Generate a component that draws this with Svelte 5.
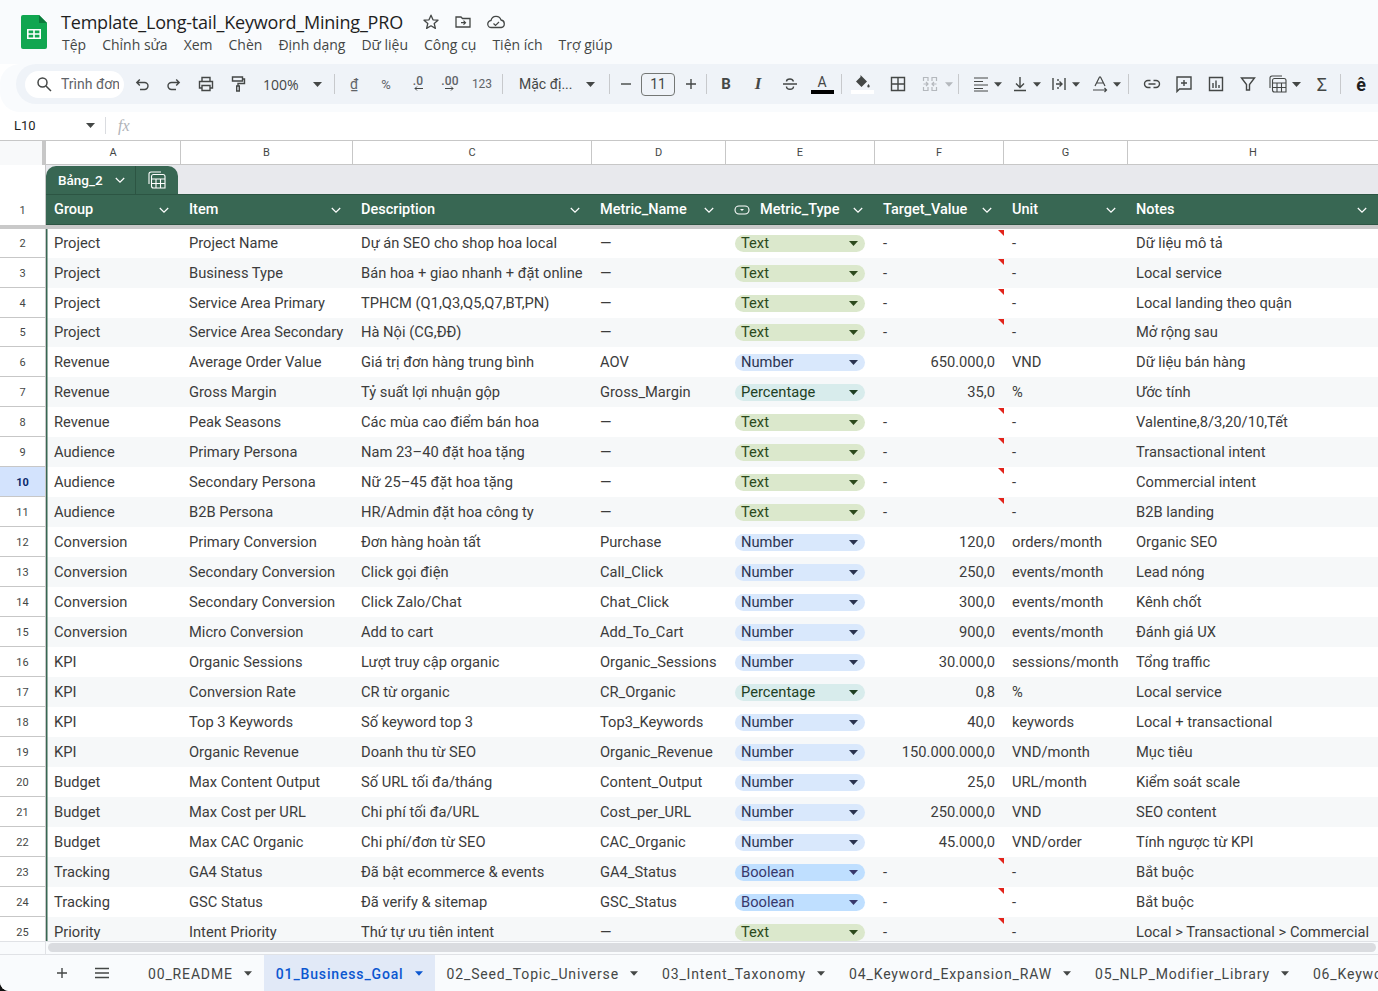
<script>
  const rows = [
    [2, 'Project', 'Project Name', 'Dự án SEO cho shop hoa local', '—', 'Text', '-', '-', 'Dữ liệu mô tả'],
    [3, 'Project', 'Business Type', 'Bán hoa + giao nhanh + đặt online', '—', 'Text', '-', '-', 'Local service'],
    [4, 'Project', 'Service Area Primary', 'TPHCM (Q1,Q3,Q5,Q7,BT,PN)', '—', 'Text', '-', '-', 'Local landing theo quận'],
    [5, 'Project', 'Service Area Secondary', 'Hà Nội (CG,ĐĐ)', '—', 'Text', '-', '-', 'Mở rộng sau'],
    [6, 'Revenue', 'Average Order Value', 'Giá trị đơn hàng trung bình', 'AOV', 'Number', '650.000,0', 'VND', 'Dữ liệu bán hàng'],
    [7, 'Revenue', 'Gross Margin', 'Tỷ suất lợi nhuận gộp', 'Gross_Margin', 'Percentage', '35,0', '%', 'Ước tính'],
    [8, 'Revenue', 'Peak Seasons', 'Các mùa cao điểm bán hoa', '—', 'Text', '-', '-', 'Valentine,8/3,20/10,Tết'],
    [9, 'Audience', 'Primary Persona', 'Nam 23–40 đặt hoa tặng', '—', 'Text', '-', '-', 'Transactional intent'],
    [10, 'Audience', 'Secondary Persona', 'Nữ 25–45 đặt hoa tặng', '—', 'Text', '-', '-', 'Commercial intent'],
    [11, 'Audience', 'B2B Persona', 'HR/Admin đặt hoa công ty', '—', 'Text', '-', '-', 'B2B landing'],
    [12, 'Conversion', 'Primary Conversion', 'Đơn hàng hoàn tất', 'Purchase', 'Number', '120,0', 'orders/month', 'Organic SEO'],
    [13, 'Conversion', 'Secondary Conversion', 'Click gọi điện', 'Call_Click', 'Number', '250,0', 'events/month', 'Lead nóng'],
    [14, 'Conversion', 'Secondary Conversion', 'Click Zalo/Chat', 'Chat_Click', 'Number', '300,0', 'events/month', 'Kênh chốt'],
    [15, 'Conversion', 'Micro Conversion', 'Add to cart', 'Add_To_Cart', 'Number', '900,0', 'events/month', 'Đánh giá UX'],
    [16, 'KPI', 'Organic Sessions', 'Lượt truy cập organic', 'Organic_Sessions', 'Number', '30.000,0', 'sessions/month', 'Tổng traffic'],
    [17, 'KPI', 'Conversion Rate', 'CR từ organic', 'CR_Organic', 'Percentage', '0,8', '%', 'Local service'],
    [18, 'KPI', 'Top 3 Keywords', 'Số keyword top 3', 'Top3_Keywords', 'Number', '40,0', 'keywords', 'Local + transactional'],
    [19, 'KPI', 'Organic Revenue', 'Doanh thu từ SEO', 'Organic_Revenue', 'Number', '150.000.000,0', 'VND/month', 'Mục tiêu'],
    [20, 'Budget', 'Max Content Output', 'Số URL tối đa/tháng', 'Content_Output', 'Number', '25,0', 'URL/month', 'Kiểm soát scale'],
    [21, 'Budget', 'Max Cost per URL', 'Chi phí tối đa/URL', 'Cost_per_URL', 'Number', '250.000,0', 'VND', 'SEO content'],
    [22, 'Budget', 'Max CAC Organic', 'Chi phí/đơn từ SEO', 'CAC_Organic', 'Number', '45.000,0', 'VND/order', 'Tính ngược từ KPI'],
    [23, 'Tracking', 'GA4 Status', 'Đã bật ecommerce & events', 'GA4_Status', 'Boolean', '-', '-', 'Bắt buộc'],
    [24, 'Tracking', 'GSC Status', 'Đã verify & sitemap', 'GSC_Status', 'Boolean', '-', '-', 'Bắt buộc'],
    [25, 'Priority', 'Intent Priority', 'Thứ tự ưu tiên intent', '—', 'Text', '-', '-', 'Local > Transactional > Commercial']
  ];
  const letters = ['A', 'B', 'C', 'D', 'E', 'F', 'G', 'H'];
  const headers = ['Group', 'Item', 'Description', 'Metric_Name', 'Metric_Type', 'Target_Value', 'Unit', 'Notes'];
  const menu = ['Tệp', 'Chỉnh sửa', 'Xem', 'Chèn', 'Định dạng', 'Dữ liệu', 'Công cụ', 'Tiện ích', 'Trợ giúp'];
  const tabs = ['00_README', '01_Business_Goal', '02_Seed_Topic_Universe', '03_Intent_Taxonomy', '04_Keyword_Expansion_RAW', '05_NLP_Modifier_Library', '06_Keyword'];
</script>

{#snippet caret()}
  <svg class="caret" width="9" height="5" viewBox="0 0 9 5"><path d="M0 0h9L4.5 5z" fill="currentColor" /></svg>
{/snippet}

{#snippet chev()}
  <svg class="chev" width="12" height="12" viewBox="0 0 12 12"><path d="M1.8 4 6 8.2 10.2 4" fill="none" stroke="#fff" stroke-width="1.2" /></svg>
{/snippet}

<div class="page">
  <header class="top">
    <svg class="logo" width="26" height="34" viewBox="0 0 26 34">
      <path d="M2 0h16l8 8v24a2 2 0 0 1-2 2H2a2 2 0 0 1-2-2V2a2 2 0 0 1 2-2z" fill="#11a650" />
      <path d="M18 0l8 8h-8z" fill="#0b7a3b" />
      <path d="M6 14h14v10H6z M7.6 15.6v2.6h4.6v-2.6z M13.8 15.6v2.6h4.6v-2.6z M7.6 19.8v2.6h4.6v-2.6z M13.8 19.8v2.6h4.6v-2.6z" fill="#fff" fill-rule="evenodd" />
    </svg>
    <div class="titles">
      <div class="title-line">
        <span class="title">Template_Long-tail_Keyword_Mining_PRO</span>
        <svg class="ti" width="18" height="18" viewBox="0 0 18 18"><path d="m9 2.2 2 4.6 5 .4-3.8 3.3 1.2 4.9L9 12.8l-4.400 2.600 1.200-4.900L2 7.200l5-.4z" fill="none" stroke="#444746" stroke-width="1.300" stroke-linejoin="round" /></svg>
        <svg class="ti" width="18" height="18" viewBox="0 0 18 18"><path d="M2 4h5l1.500 1.500H16V14H2z" fill="none" stroke="#444746" stroke-width="1.300" /><path d="M7 9.700h4M9.500 7.700l2 2-2 2" fill="none" stroke="#444746" stroke-width="1.200" /></svg>
        <svg class="ti" width="20" height="18" viewBox="0 0 20 18"><path d="M5.500 14.500a3.500 3.500 0 0 1-.5-7A5.200 5.200 0 0 1 15 7a3.800 3.800 0 0 1 .2 7.500z" fill="none" stroke="#444746" stroke-width="1.300" /><path d="m7.500 10.500 2 2 3.500-3.500" fill="none" stroke="#444746" stroke-width="1.200" /></svg>
      </div>
      <nav class="menu">
        {#each menu as item}<span>{item}</span>{/each}
      </nav>
    </div>
  </header>

  <div class="toolbar">
    <div class="search">
      <svg width="16" height="16" viewBox="0 0 16 16"><circle cx="6.500" cy="6.500" r="4.500" fill="none" stroke="#444746" stroke-width="1.500" /><path d="m10 10 5 5" stroke="#444746" stroke-width="1.500" /></svg>
      <span>Trình đơn</span>
    </div>
    <span class="btn"><svg width="18" height="18" viewBox="0 0 18 18"><path d="M4 7.500h7.500a3.500 3.500 0 0 1 0 7H7M6.800 4.500 3.800 7.500l3 3" class="st" /></svg></span>
    <span class="btn"><svg width="18" height="18" viewBox="0 0 18 18"><path d="M14 7.500H6.500a3.500 3.500 0 0 0 0 7H11M11.200 4.500l3 3-3 3" class="st" /></svg></span>
    <span class="btn"><svg width="18" height="18" viewBox="0 0 18 18"><path d="M5 6V2.500h8V6M5 13H2.500V6.500h13V13H13M5 10.500h8v5H5z" class="st" /></svg></span>
    <span class="btn"><svg width="18" height="18" viewBox="0 0 18 18"><path d="M3.500 2h10v4h-10zM13.500 4h2v4.500H9V11M7.700 11h2.600v5H7.700z" class="st" /></svg></span>
    <span class="zoom">100%</span>
    <span class="cbtn z">{@render caret()}</span>
    <i class="sep zs"></i>
    <span class="btn txt dong">₫</span>
    <span class="btn txt">%</span>
    <span class="btn dec"><b>.0</b><svg width="10" height="5" viewBox="0 0 10 5"><path d="M10 2.500H2M4 .5l-2 2 2 2" fill="none" stroke="#444746" stroke-width="1" /></svg></span>
    <span class="btn dec"><b>.00</b><svg width="10" height="5" viewBox="0 0 10 5"><path d="M0 2.500h8M6 .5l2 2-2 2" fill="none" stroke="#444746" stroke-width="1" /></svg></span>
    <span class="btn txt small">123</span>
    <i class="sep s2"></i>
    <span class="font">Mặc đị...</span>
    <span class="cbtn f">{@render caret()}</span>
    <i class="sep s3"></i>
    <span class="btn nar"><svg width="14" height="14" viewBox="0 0 14 14"><path d="M2 7h10" class="st" /></svg></span>
    <span class="size">11</span>
    <span class="btn nar"><svg width="14" height="14" viewBox="0 0 14 14"><path d="M2 7h10M7 2v10" class="st" /></svg></span>
    <i class="sep s4"></i>
    <span class="btn bold">B</span>
    <span class="btn ital">I</span>
    <span class="btn"><svg width="18" height="18" viewBox="0 0 18 18"><path d="M2 9h14M12.500 6.500C12 5 10.700 4 9 4S5.500 5 5.500 6.500M12.500 11.500c0 1.500-1.500 2.700-3.500 2.700s-3.500-1.200-3.500-2.700" class="st" /></svg></span>
    <span class="btn acol"><span>A</span><i></i></span>
    <i class="sep s5"></i>
    <span class="btn fill">
      <svg width="18" height="14" viewBox="0 0 18 14"><path d="M7.500 0 9 1.500 14 6.500 8.500 12 3 6.500 7.500 2z" fill="#444746" /><path d="M15.500 9c.8 1 1.200 1.700 1.200 2.300a1.200 1.200 0 0 1-2.400 0c0-.6.400-1.300 1.200-2.300z" fill="#444746" /></svg>
      <i></i>
    </span>
    <span class="btn b2"><svg width="18" height="18" viewBox="0 0 18 18"><path d="M2.500 2.500h13v13h-13zM9 2.500v13M2.500 9h13" class="st" /></svg></span>
    <span class="btn"><svg width="18" height="18" viewBox="0 0 18 18"><path d="M2.500 6V2.500H7V6M11 6V2.500h4.500V6M2.500 12v3.500H7V12M11 12v3.500h4.500V12M2.500 9h4M5 7l2 2-2 2M15.500 9h-4M13 7l-2 2 2 2" fill="none" stroke="#b4b8bd" stroke-width="1.200" /></svg></span>
    <span class="cbtn m">{@render caret()}</span>
    <i class="sep s6"></i>
    <span class="btn w"><svg width="18" height="18" viewBox="0 0 18 18"><path d="M2 3h14M2 6.500h9M2 10h14M2 13.500h9M2 16h14" fill="none" stroke="#444746" stroke-width="1" /></svg></span>
    <span class="cbtn">{@render caret()}</span>
    <span class="btn w"><svg width="18" height="18" viewBox="0 0 18 18"><path d="M9 2v10M5 8.500l4 4 4-4M3 15.500h12" class="st" /></svg></span>
    <span class="cbtn">{@render caret()}</span>
    <span class="btn w"><svg width="18" height="18" viewBox="0 0 18 18"><path d="M3 3v12M15 3v12M6 9h6M9.500 6.500 12 9l-2.500 2.500" class="st" /><path d="M8 4v2M8 12v2" class="st" /></svg></span>
    <span class="cbtn">{@render caret()}</span>
    <span class="btn w rot"><svg width="18" height="18" viewBox="0 0 18 18"><path d="M4 11 8.500 2h1L14 11M5.500 8h7M2 15h13M13.500 13l2 2-2 2" fill="none" stroke="#444746" stroke-width="1.200" /></svg></span>
    <span class="cbtn">{@render caret()}</span>
    <i class="sep s7"></i>
    <span class="btn"><svg width="18" height="18" viewBox="0 0 18 18"><path d="M7.500 5.500H5a3.500 3.500 0 0 0 0 7h2.500M10.500 5.500H13a3.500 3.500 0 0 1 0 7h-2.500M5.500 9h7" class="st" /></svg></span>
    <span class="btn"><svg width="18" height="18" viewBox="0 0 18 18"><path d="M2 2h14v12H4.500L2 16.500zM9 5v6M6 8h6" class="st" /></svg></span>
    <span class="btn"><svg width="18" height="18" viewBox="0 0 18 18"><path d="M2.500 2.500h13v13h-13z" class="st" /><path d="M6 8v5M9 5.500V13M12 10v3" class="st" /></svg></span>
    <span class="btn"><svg width="18" height="18" viewBox="0 0 18 18"><path d="M2.500 3h13L10.500 9.500V15h-3V9.500z" class="st" /></svg></span>
    <span class="btn tbl"><svg width="18" height="18" viewBox="0 0 18 18"><path d="M1 13V3a2 2 0 0 1 2-2h10M3.500 5.500a2 2 0 0 1 2-2H15a2 2 0 0 1 2 2V17H5.500a2 2 0 0 1-2-2zM3.500 8h13.500M8 8v9M12.500 8v9M3.500 12.500h13.500" fill="none" stroke="#444746" stroke-width="1.100" /></svg></span>
    <span class="cbtn t">{@render caret()}</span>
    <span class="btn sig">Σ</span>
    <i class="sep s8"></i>
    <span class="btn vi">ê</span>
  </div>

  <div class="fbar">
    <span class="ref">L10</span>
    <span class="cbtn r">{@render caret()}</span>
    <i class="fsep"></i>
    <span class="fx">fx</span>
  </div>

  <div class="sheet">
    <div class="cols">
      <div class="corner"></div>
      {#each letters as l}<div class="col">{l}</div>{/each}
    </div>
    <div class="tabrow">
      <div class="tr-head"></div>
      <div class="tr-band">
        <div class="ttab">
          <span class="tname">Bảng_2 {@render chev()}</span>
          <span class="ticon"><svg width="18" height="18" viewBox="0 0 18 18"><path d="M1 13V3a2 2 0 0 1 2-2h10M3.500 5.500a2 2 0 0 1 2-2H15a2 2 0 0 1 2 2V17H5.500a2 2 0 0 1-2-2zM3.500 8h13.500M8 8v9M12.500 8v9M3.500 12.500h13.500" fill="none" stroke="#fff" stroke-width="1.100" /></svg></span>
        </div>
      </div>
    </div>
    <div class="row hrow">
      <div class="rh">1</div>
      {#each headers as h, i}
        <div class="hc">
          {#if i === 4}
            <svg class="pillico" width="16" height="12" viewBox="0 0 16 12"><rect x="1" y="2" width="14" height="8" rx="4" fill="none" stroke="#fff" stroke-width="1.100" /><path d="M6 5h4L8 7z" fill="#fff" /></svg>
          {/if}
          <span>{h}</span>
          {@render chev()}
        </div>
      {/each}
    </div>
    <div class="freeze"></div>
    <div class="body">
      {#each rows as r}
        <div class="row drow" class:alt={r[0] % 2 === 1} class:sel={r[0] === 10}>
          <div class="rh">{r[0]}</div>
          <div class="c first">{r[1]}</div>
          <div class="c">{r[2]}</div>
          <div class="c">{r[3]}</div>
          <div class="c">{r[4]}</div>
          <div class="c pc">
            <span class="pill {r[5].toLowerCase()}">{r[5]}{@render caret()}</span>
          </div>
          <div class="c" class:num={r[6] !== '-'} class:note={r[6] === '-'}>{r[6]}</div>
          <div class="c">{r[7]}</div>
          <div class="c">{r[8]}</div>
        </div>
      {/each}
    </div>
    <div class="hscroll">
      <div class="hs-left"></div>
      <div class="hs-track"><div class="hs-thumb"></div></div>
    </div>
  </div>

  <footer class="tabs">
    <span class="tb-icon plus"><svg width="14" height="14" viewBox="0 0 14 14"><path d="M2 7h10M7 2v10" fill="none" stroke="#444746" stroke-width="1.400" /></svg></span>
    <span class="tb-icon"><svg width="16" height="14" viewBox="0 0 16 14"><path d="M1 2.500h14M1 7h14M1 11.500h14" fill="none" stroke="#444746" stroke-width="1.400" /></svg></span>
    <div class="tablist">
      {#each tabs as t, i}
        <div class="tab" class:active={i === 1}><span>{t}</span>{@render caret()}</div>
      {/each}
    </div>
  </footer>
</div>

<style>
  :global(body) {
    margin: 0;
    background: #111;
  }

  .page {
    width: 1378px;
    height: 991px;
    overflow: hidden;
    background: #fff;
    display: flex;
    flex-direction: column;
    font-family: Roboto, "Noto Sans", sans-serif;
    color: #3c4043;
    border-bottom-left-radius: 9px;
  }

  /* title + menu */
  .top {
    height: 64px;
    box-sizing: border-box;
    background: #f9fbfd;
    display: flex;
    padding: 15px 0 0 21px;
    flex-shrink: 0;
  }
  .titles {
    margin-left: 14px;
    margin-top: -5px;
  }
  .title-line {
    display: flex;
    align-items: center;
    height: 24px;
  }
  .title {
    font-family: "Open Sans", sans-serif;
    font-size: 18px;
    color: #1f1f1f;
    letter-spacing: -0.19px;
    margin-right: 19px;
  }
  .ti {
    margin-right: 14px;
  }
  .menu {
    display: flex;
    gap: 16px;
    margin-top: 1px;
    padding-left: 1px;
    font-family: "Open Sans", sans-serif;
    font-size: 14px;
    color: #444746;
  }

  /* toolbar */
  .toolbar {
    height: 40px;
    margin-left: 16px;
    background: #eff3f8;
    border-radius: 20px 0 0 20px;
    display: flex;
    align-items: center;
    flex-shrink: 0;
    padding-left: 9px;
    box-shadow: 0 8px 0 #f9fbfd, 0 -1px 0 #f9fbfd, -16px 8px 0 #f9fbfd, -16px 0 0 #f9fbfd;
    color: #444746;
  }
  .search {
    width: 99px;
    height: 27px;
    box-sizing: border-box;
    background: #fff;
    border-radius: 14px;
    display: flex;
    align-items: center;
    padding: 0 5px 0 11px;
    overflow: hidden;
    white-space: nowrap;
    font-size: 14px;
    color: #5f6368;
    margin-right: 2px;
    flex-shrink: 0;
  }
  .search svg {
    flex-shrink: 0;
  }
  .search span {
    margin-left: 9px;
    overflow: hidden;
    min-width: 0;
  }
  .btn {
    width: 32px;
    height: 28px;
    display: flex;
    align-items: center;
    justify-content: center;
    flex-shrink: 0;
    font-size: 13px;
  }
  .st {
    fill: none;
    stroke: #444746;
    stroke-width: 1.4;
  }
  .cbtn {
    display: flex;
    width: 17px;
    justify-content: center;
    flex-shrink: 0;
    color: #444746;
  }
  .cbtn.z {
    width: 18px;
  }
  .sep {
    width: 1px;
    height: 20px;
    background: #c7c9cc;
    flex-shrink: 0;
    display: block;
  }
  .zs {
    margin: 0 3px 0 8px;
  }
  .zoom {
    width: 54px;
    padding-left: 9px;
    box-sizing: border-box;
    font-family: "Open Sans", sans-serif;
    font-size: 14px;
    flex-shrink: 0;
  }
  .txt {
    font-size: 13px;
    color: #5f6368;
  }
  .dong {
    font-size: 14px;
  }
  .small {
    font-size: 12px;
  }
  .dec {
    flex-direction: column;
    line-height: 9px;
  }
  .dec b {
    font-weight: 500;
    font-size: 12px;
    color: #5f6368;
    letter-spacing: 0.2px;
  }
  .s2 {
    margin: 0 16px 0 4px;
  }
  .font {
    width: 65px;
    font-size: 14px;
    flex-shrink: 0;
    white-space: nowrap;
  }
  .cbtn.f {
    width: 12px;
  }
  .s3 {
    margin: 0 0 0 13px;
  }
  .nar {
    width: 31px;
  }
  .size {
    width: 34px;
    height: 23px;
    box-sizing: border-box;
    border: 1px solid #747775;
    border-radius: 4px;
    text-align: center;
    line-height: 21px;
    font-size: 14px;
    flex-shrink: 0;
  }
  .s4 {
    margin: 0 3px 0 0;
  }
  .bold {
    font-weight: 700;
    font-size: 15px;
  }
  .ital {
    font-family: "Liberation Serif", serif;
    font-style: italic;
    font-weight: 700;
    font-size: 17px;
  }
  .acol {
    flex-direction: column;
    font-size: 14px;
    line-height: 15px;
    color: #444746;
  }
  .acol i {
    display: block;
    width: 23px;
    height: 4px;
    background: #000;
  }
  .s5 {
    margin: 0 3px 0 3px;
  }
  .fill {
    flex-direction: column;
    width: 34px;
    gap: 1px;
  }
  .fill i {
    display: block;
    width: 23px;
    height: 4px;
    background: #fff;
  }
  .b2 {
    margin-left: 3px;
  }
  .cbtn.m {
    width: 8px;
    color: #b4b8bd;
    margin-left: -1px;
  }
  .s6 {
    margin: 0 6px 0 5px;
  }
  .w {
    width: 32px;
  }
  .rot {
    margin-left: 2px;
  }
  .toolbar .cbtn:not(.z):not(.f):not(.m):not(.t) {
    width: 8px;
    margin-right: 2px;
    margin-left: -3px;
  }
  .s7 {
    margin: 0 7px 0 5px;
  }
  .tbl {
    width: 28px;
  }
  .cbtn.t {
    width: 10px;
    margin-left: -1px;
  }
  .sig {
    font-size: 18px;
    margin-left: 5px;
  }
  .s8 {
    margin: 0 3px 0 2px;
  }
  .vi {
    font-size: 18px;
    font-weight: 700;
    color: #1f1f1f;
    width: 34px;
  }

  /* formula bar */
  .fbar {
    margin-top: 8px;
    display: flex;
    align-items: center;
    padding-left: 14px;
    flex-shrink: 0;
    font-size: 13px;
    color: #1f1f1f;
    border-bottom: 1px solid #c7c7c7;
    box-sizing: border-box;
    height: 29px;
    padding-bottom: 1px;
  }
  .ref {
    width: 71px;
  }
  .cbtn.r {
    width: 10px;
  }
  .fsep {
    display: block;
    width: 1px;
    height: 17px;
    background: #dadce0;
    margin: 0 12px 0 10px;
  }
  .fx {
    font-family: "Liberation Serif", serif;
    font-style: italic;
    font-size: 16px;
    color: #b0b3b8;
  }

  /* grid */
  .sheet {
    flex: 1;
    min-height: 0;
    display: flex;
    flex-direction: column;
    overflow: hidden;
  }
  .cols,
  .row {
    display: grid;
    grid-template-columns: 46px 135px 172px 239px 134px 149px 129px 124px 250px;
  }
  .cols {
    height: 24px;
    box-sizing: border-box;
    border-bottom: 1px solid #c7c7c7;
    flex-shrink: 0;
  }
  .corner {
    background: #f8f9fa;
    border-right: 4px solid #c7c7c7;
  }
  .col {
    font-size: 11px;
    color: #444746;
    text-align: center;
    line-height: 24px;
    border-right: 1px solid #c7c7c7;
  }
  .col:last-child {
    border-right: none;
  }
  .tabrow {
    height: 29px;
    display: flex;
    flex-shrink: 0;
  }
  .tr-head {
    width: 45px;
    border-right: 1px solid #c7c7c7;
  }
  .tr-band {
    flex: 1;
    background: #e8e9ed;
    display: flex;
    align-items: flex-end;
  }
  .ttab {
    width: 132px;
    height: 28px;
    background: #386753;
    border-radius: 10px 10px 0 0;
    display: flex;
    color: #fff;
    font-size: 13.500px;
    font-weight: 500;
  }
  .tname {
    width: 90px;
    box-sizing: border-box;
    padding-left: 12px;
    border-right: 1px solid #2c5543;
    display: flex;
    align-items: center;
    gap: 11px;
  }
  .ticon {
    flex: 1;
    display: flex;
    align-items: center;
    justify-content: center;
  }
  .hrow {
    height: 31px;
    flex-shrink: 0;
  }
  .hrow .rh {
    border-bottom: none;
  }
  .hc {
    background: #386753;
    border-top: 1px solid #2c5543;
    border-bottom: 1px solid #2c5543;
    color: #fff;
    font-size: 14.500px;
    font-weight: 500;
    display: flex;
    align-items: center;
    padding: 0 11px 0 8px;
    min-width: 0;
  }
  .hc:last-child {
    padding-right: 10px;
  }
  .hc .chev {
    margin-left: auto;
  }
  .pillico {
    margin: 0 10px 0 0;
  }
  .freeze {
    height: 4px;
    background: #c9c9c9;
    flex-shrink: 0;
  }
  .rh {
    font-size: 11px;
    color: #444746;
    display: flex;
    align-items: center;
    justify-content: center;
    border-right: 1px solid #c7c7c7;
    border-bottom: 1px solid #c7c7c7;
    background: #fff;
    padding-top: 1px;
  }
  .body {
    flex: 1;
    min-height: 0;
    overflow: hidden;
  }
  .drow {
    height: 30px;
  }
  .drow:nth-child(1),
  .drow:nth-child(4) {
    height: 29px;
  }
  .drow:nth-child(1) .c,
  .drow:nth-child(4) .c {
    padding-bottom: 1px;
  }
  .drow.alt .c {
    background: #f6f8f9;
  }
  .sel .rh {
    background: #d3e3fd;
    color: #0b2a6b;
    font-weight: 700;
  }
  .c {
    font-size: 14.700px;
    color: #3c3c3c;
    padding: 0 8px;
    display: flex;
    align-items: center;
    white-space: nowrap;
    overflow: hidden;
    position: relative;
    min-width: 0;
    background: #fff;
  }
  .first {
    box-shadow: inset 1.500px 0 0 #386753;
  }
  .num {
    justify-content: flex-end;
    padding-right: 9px;
  }
  .note::after {
    content: "";
    position: absolute;
    top: 1px;
    right: 0;
    border-top: 6px solid #e2231a;
    border-left: 6px solid transparent;
  }
  .pc {
    padding-left: 9px;
  }
  .pill {
    width: 130px;
    height: 17px;
    box-sizing: border-box;
    border-radius: 9px;
    padding: 0 6px;
    display: flex;
    align-items: center;
    justify-content: space-between;
    font-size: 14.700px;
    flex-shrink: 0;
  }
  .pill .caret {
    margin-right: 1px;
  }
  .text {
    background: #dbe8cc;
    color: #2c4a1c;
  }
  .number {
    background: #d9e8fc;
    color: #2b3450;
  }
  .percentage {
    background: #d8ecec;
    color: #1e4023;
  }
  .boolean {
    background: #bfdfff;
    color: #38386b;
  }

  .hscroll {
    height: 13px;
    display: flex;
    flex-shrink: 0;
    border-top: 1px solid #e0e2e6;
    box-sizing: border-box;
    background: #f9fbfd;
  }
  .hs-left {
    width: 46px;
    border-right: 1px solid #e0e2e6;
    box-sizing: border-box;
  }
  .hs-track {
    flex: 1;
    padding: 1px 2px;
  }
  .hs-thumb {
    height: 9px;
    background: #dadce0;
    border-radius: 5px;
  }

  /* sheet tabs */
  .tabs {
    height: 37px;
    flex-shrink: 0;
    background: #f9fbfd;
    border-top: 1px solid #e0e2e6;
    box-sizing: border-box;
    display: flex;
    align-items: stretch;
    overflow: hidden;
  }
  .tb-icon {
    width: 40px;
    display: flex;
    align-items: center;
    justify-content: center;
    flex-shrink: 0;
  }
  .plus {
    margin-left: 42px;
  }
  .tablist {
    display: flex;
    margin-left: 14px;
  }
  .tab {
    display: flex;
    align-items: center;
    padding: 1px 12px 0;
    white-space: nowrap;
    font-size: 14px;
    font-weight: 400;
    color: #444746;
    letter-spacing: 0.85px;
    flex-shrink: 0;
  }
  .tab .caret {
    margin-left: 11px;
    width: 8px;
  }
  .tab.active {
    background: #e1e9f7;
    color: #0b57d0;
    font-weight: 500;
    letter-spacing: 0.85px;
  }
</style>
